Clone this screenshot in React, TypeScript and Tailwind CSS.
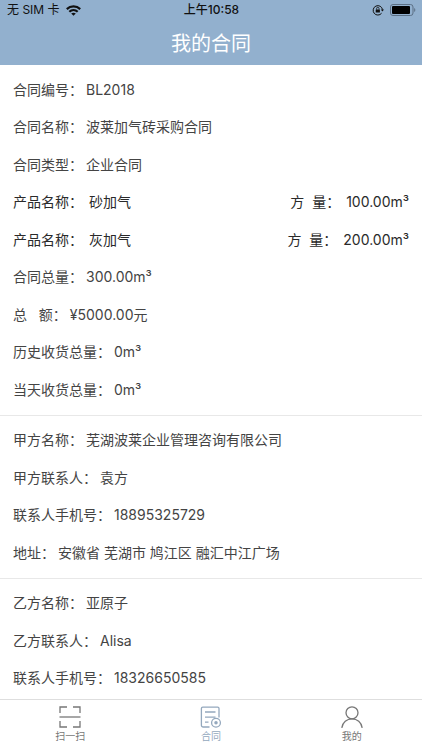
import React from 'react';

interface Field {
  label: string;
  value: string;
}

interface Product {
  name: string;
  volume: string;
}

const contractFields: Field[] = [
  { label: '合同编号：', value: 'BL2018' },
  { label: '合同名称：', value: '波莱加气砖采购合同' },
  { label: '合同类型：', value: '企业合同' },
];

const products: Product[] = [
  { name: '砂加气', volume: '100.00m³' },
  { name: '灰加气', volume: '200.00m³' },
];

const totalFields: Field[] = [
  { label: '合同总量：', value: '300.00m³' },
  { label: '总\u00a0\u00a0\u00a0额：', value: '¥5000.00元' },
  { label: '历史收货总量：', value: '0m³' },
  { label: '当天收货总量：', value: '0m³' },
];

const partyAFields: Field[] = [
  { label: '甲方名称：', value: '芜湖波莱企业管理咨询有限公司' },
  { label: '甲方联系人：', value: '袁方' },
  { label: '联系人手机号：', value: '18895325729' },
  { label: '地址：', value: '安徽省 芜湖市 鸠江区 融汇中江广场' },
];

const partyBFields: Field[] = [
  { label: '乙方名称：', value: '亚原子' },
  { label: '乙方联系人：', value: 'Alisa' },
  { label: '联系人手机号：', value: '18326650585' },
];

const WifiIcon = () => (
  <svg width="15" height="11" viewBox="0 0 15 11" fill="none" stroke="#111" strokeWidth="2.2">
    <path d="M0.8 4.1C4.6 0.5 10.4 0.5 14.2 4.1" />
    <path d="M3.3 6.7C5.7 4.5 9.3 4.5 11.7 6.7" />
    <path d="M7.5 10.8L5.2 8.5C6.5 7.4 8.5 7.4 9.8 8.5Z" fill="#111" stroke="none" />
  </svg>
);

const RotationLockIcon = () => (
  <svg width="12" height="12" viewBox="0 0 12 12" fill="none" stroke="#111">
    <path d="M9.6 9.2A4.7 4.7 0 1 1 10.5 5.6" />
    <path d="M8.8 5.4H12L10.4 7.6Z" fill="#111" stroke="none" />
    <rect x="3.7" y="5.4" width="4.2" height="3.2" rx="0.4" fill="#111" stroke="none" />
    <path d="M4.6 5.6V4.5A1.2 1.2 0 0 1 7 4.5V5.6" strokeWidth="0.8" />
  </svg>
);

const BatteryIcon = () => (
  <svg width="26" height="12" viewBox="0 0 26 12" fill="none">
    <rect x="0.5" y="0.5" width="22.5" height="11" rx="2.5" stroke="#5b6f84" />
    <rect x="2" y="2" width="18" height="8" rx="1" fill="#000" />
    <path d="M24.2 4V8C25.7 7.4 25.7 4.6 24.2 4Z" fill="#5b6f84" />
  </svg>
);

const ScanIcon = () => (
  <svg width="22" height="22" viewBox="0 0 22 22" fill="none" stroke="currentColor" strokeWidth="1.3">
    <path d="M1 7V1H8M14 1H21V7M21 15V21H14M8 21H1V15" />
    <path d="M0.5 11H21.5" />
  </svg>
);

const ContractIcon = () => (
  <svg width="22" height="22" viewBox="0 0 22 22" fill="none" stroke="currentColor" strokeWidth="1.3">
    <path d="M9.5 21H3.2A1.8 1.8 0 0 1 1.4 19.2V2.6A1.4 1.4 0 0 1 2.8 1.2H17.6A1.4 1.4 0 0 1 19 2.6V11.5" />
    <path d="M5 6H15.5M5 11.2H15.5M5 16.2H8.5" />
    <circle cx="16" cy="16.8" r="4.4" />
    <circle cx="16" cy="16.8" r="1.1" fill="currentColor" />
  </svg>
);

const UserIcon = () => (
  <svg width="22" height="22" viewBox="0 0 22 22" fill="none" stroke="currentColor" strokeWidth="1.3">
    <circle cx="11" cy="6.8" r="6" />
    <path d="M0.8 21.8C1.6 16.2 5.8 12.8 11 12.8C16.2 12.8 20.4 16.2 21.2 21.8" />
  </svg>
);

const tabs = [
  { name: '扫一扫', icon: <ScanIcon />, active: false },
  { name: '合同', icon: <ContractIcon />, active: true },
  { name: '我的', icon: <UserIcon />, active: false },
];

const FieldRow: React.FC<Field> = ({ label, value }) => (
  <div className="flex flex-1 items-center gap-[3px] text-[#444]">
    <dt>{label}</dt>
    <dd>{value}</dd>
  </div>
);

const ProductRow: React.FC<Product> = ({ name, volume }) => (
  <div className="flex flex-1 items-center justify-between text-[#2a2a2a]">
    <div className="flex gap-1.5">
      <dt>产品名称：</dt>
      <dd>{name}</dd>
    </div>
    <div className="flex gap-1.5">
      <dt>方&nbsp; 量：</dt>
      <dd>{volume}</dd>
    </div>
  </div>
);

const renderFields = (fields: Field[]) =>
  fields.map((field) => <FieldRow key={field.label} {...field} />);

export default function App() {
  return (
    <div className="flex min-h-screen flex-col bg-white font-[Inter,'Noto_Sans_CJK_SC',sans-serif]">
      <header className="bg-[#92b0ce]">
        <div className="grid h-5 grid-cols-3 items-center pr-1.5 pl-[7px] text-xs text-[#111]">
          <div className="flex items-center gap-1.5">
            <span>无 SIM 卡</span>
            <WifiIcon />
          </div>
          <time className="text-center font-medium">上午10:58</time>
          <div className="flex items-center justify-end gap-1.5">
            <RotationLockIcon />
            <BatteryIcon />
          </div>
        </div>
        <h1 className="pt-2.5 pb-[7px] text-center text-xl leading-7 text-white">我的合同</h1>
      </header>

      <main className="flex flex-1 flex-col text-sm">
        <dl className="flex flex-[9] flex-col border-b border-[#e8e8e8] px-[13px] py-1.5">
          {renderFields(contractFields)}
          {products.map((product) => (
            <ProductRow key={product.name} {...product} />
          ))}
          {renderFields(totalFields)}
        </dl>
        <dl className="flex flex-[4] flex-col border-b border-[#e8e8e8] px-[13px] py-1.5">
          {renderFields(partyAFields)}
        </dl>
        <dl className="flex flex-[3] flex-col px-[13px] pt-1.5 pb-0.5">{renderFields(partyBFields)}</dl>
      </main>

      <nav className="sticky bottom-0 grid grid-cols-3 border-t border-[#dedede] bg-white py-1.5">
        {tabs.map((tab) => (
          <button
            key={tab.name}
            className={`flex flex-col items-center text-[10px] leading-4 ${
              tab.active ? 'text-[#94a8bd]' : 'text-[#777]'
            }`}
          >
            {tab.icon}
            <span>{tab.name}</span>
          </button>
        ))}
      </nav>
    </div>
  );
}
